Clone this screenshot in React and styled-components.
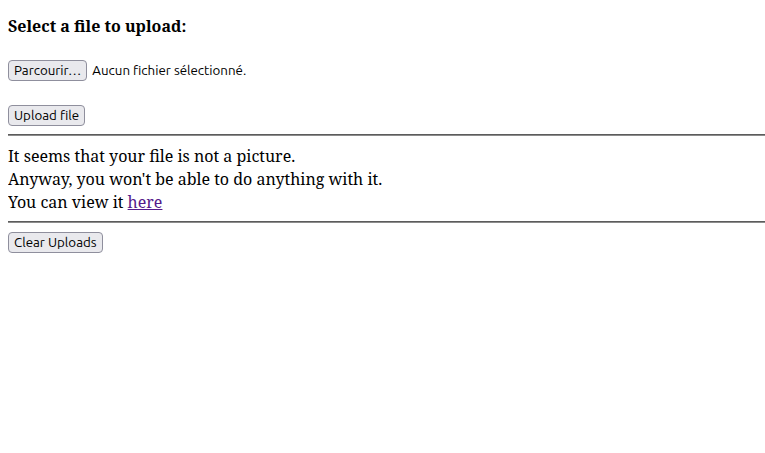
import React from "react";
import styled, { createGlobalStyle } from "styled-components";

const Global = createGlobalStyle`
  html, body { background: #fff; }
  body {
    margin: 8px 0 8px 8px;
    font-family: "Noto Serif", "DejaVu Serif", serif;
    font-size: 16px;
    color: #000;
  }
`;

const Heading = styled.h4`
  margin: 7px 0 23px;
  font-size: 16px;
  font-weight: bold;
  line-height: 22px;
`;

const Form = styled.form`
  display: flex;
  flex-direction: column;
  align-items: flex-start;
  gap: 24px;
  margin: 0 0 8px;
`;

const FileRow = styled.div`
  display: flex;
  align-items: center;
  gap: 5px;
`;

const Button = styled.button`
  font-family: "Ubuntu", "Noto Sans", "Open Sans", sans-serif;
  font-size: 13.33px;
  line-height: 15px;
  color: #000;
  background: #e9e9ed;
  border: 1px solid #8f8f9d;
  border-radius: 4px;
  padding: 2px 5px;
  height: 21px;
  cursor: default;
`;

const Status = styled.span`
  font-family: "Ubuntu", "Noto Sans", "Open Sans", sans-serif;
  font-size: 13.33px;
  color: #000;
`;

const Rule = styled.hr`
  margin: 0;
  border: none;
  border-top: 1px solid #5c5c5c;
  border-bottom: 1px solid #8c8c8c;
  height: 0;
`;

const Message = styled.div`
  padding: 9px 0 7px;
  line-height: 23px;
`;

const Link = styled.a`
  color: #551a8b;
`;

const Footer = styled.div`
  padding-top: 7px;
`;

export default function App() {
  return (
    <>
      <Global />
      <Heading>Select a file to upload:</Heading>
      <Form onSubmit={(e) => e.preventDefault()}>
        <FileRow>
          <Button type="button">Parcourir…</Button>
          <Status>Aucun fichier sélectionné.</Status>
        </FileRow>
        <Button type="submit">Upload file</Button>
      </Form>
      <Rule />
      <Message>
        It seems that your file is not a picture.
        <br />
        Anyway, you won't be able to do anything with it.
        <br />
        You can view it <Link href="#">here</Link>
      </Message>
      <Rule />
      <Footer>
        <Button type="button">Clear Uploads</Button>
      </Footer>
    </>
  );
}
